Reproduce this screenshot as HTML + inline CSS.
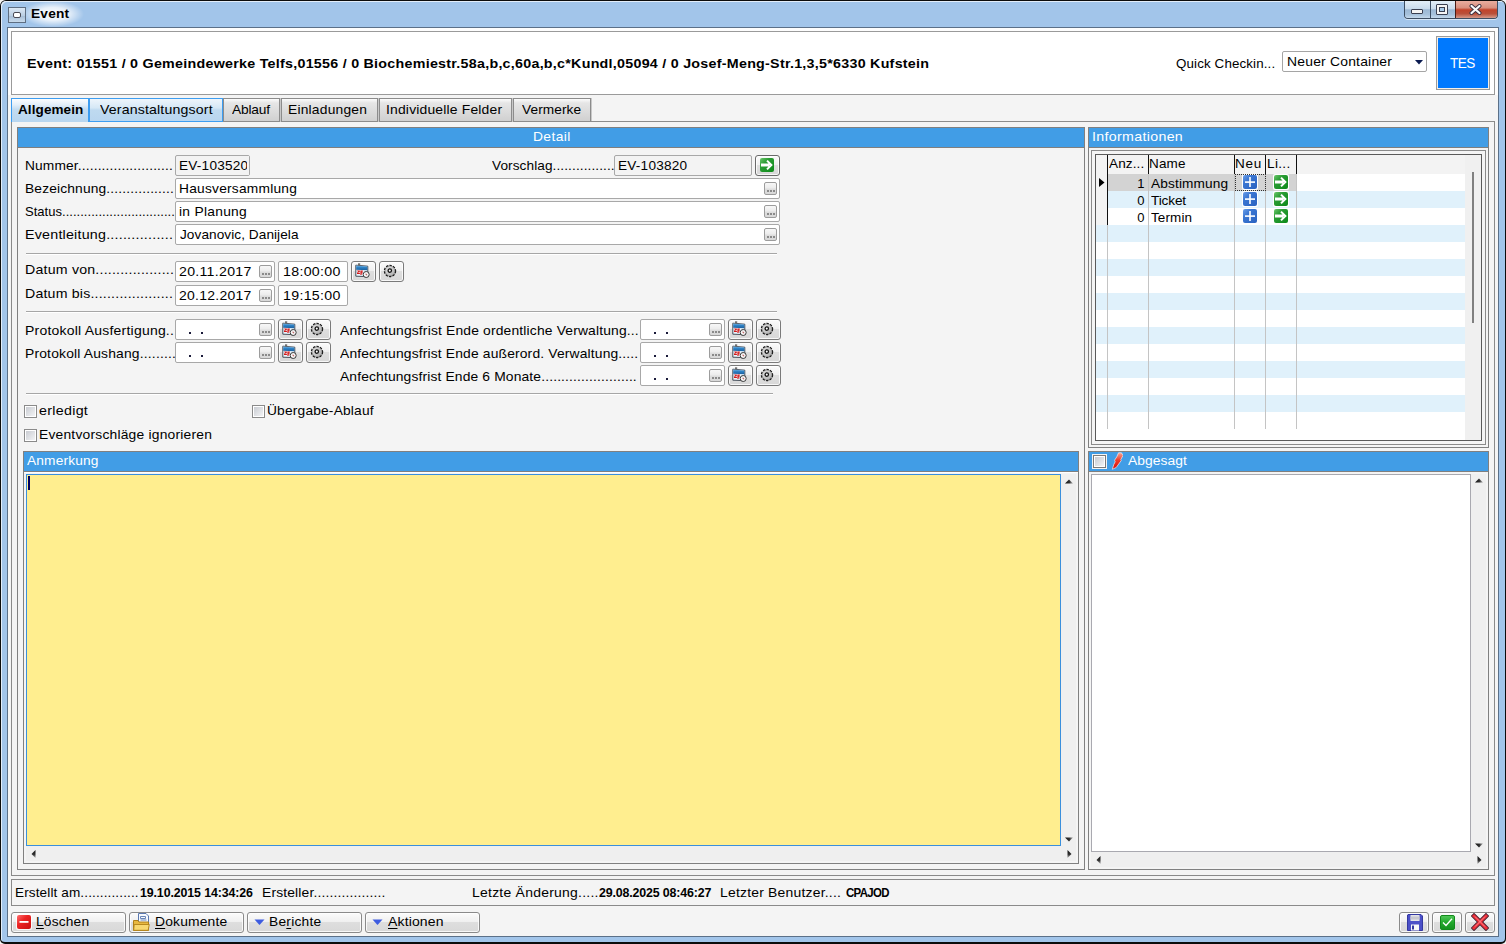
<!DOCTYPE html>
<html><head><meta charset="utf-8"><title>Event</title>
<style>
*{box-sizing:border-box}
html,body{margin:0;padding:0}
body{width:1506px;height:944px;overflow:hidden;position:relative;font-family:"Liberation Sans",sans-serif;font-size:13px;color:#000;background:#f4f4f4}
.a{position:absolute}
.t{position:absolute;white-space:nowrap;line-height:16px}
u{text-decoration:underline;text-underline-offset:2px}
</style></head><body>
<svg width="0" height="0" style="position:absolute"><defs><linearGradient id="ah" x1="0" y1="0" x2="1" y2="0"><stop offset="0" stop-color="#101010"/><stop offset=".55" stop-color="#303030"/><stop offset="1" stop-color="#b0b0b0"/></linearGradient><linearGradient id="av" x1="0" y1="0" x2="0" y2="1"><stop offset="0" stop-color="#101010"/><stop offset=".55" stop-color="#303030"/><stop offset="1" stop-color="#b0b0b0"/></linearGradient><linearGradient id="bolt" x1="0" y1="0" x2="0" y2="1"><stop offset="0" stop-color="#f7a595"/><stop offset=".45" stop-color="#ee3a2a"/><stop offset="1" stop-color="#d80c0c"/></linearGradient><linearGradient id="gearg" x1="0" y1="0" x2="1" y2="1"><stop offset="0" stop-color="#e8e8e8"/><stop offset="1" stop-color="#a8a8a8"/></linearGradient></defs></svg>
<div class="a" style="left:0px;top:0px;width:1506px;height:944px;background:#0c0c0c;border-radius:6px 6px 5px 5px"></div>
<div class="a" style="left:1px;top:1px;width:1504px;height:941px;background:#a2c5ea;border-radius:5px 5px 4px 4px;box-shadow:inset 1px 1px 0 #e3eefa"></div>
<div class="a" style="left:22px;top:1px;width:62px;height:26px;background:radial-gradient(ellipse closest-side at center,rgba(255,255,255,.95) 0%,rgba(255,255,255,.75) 50%,rgba(255,255,255,0) 100%)"></div>
<div class="a" style="left:8px;top:7px;width:18px;height:16px;border:1px solid #5e6e82;background:linear-gradient(#dde9f5,#b9cde2 55%,#a9c0d8 60%,#c9dbec);"></div>
<div class="a" style="left:13px;top:12px;width:8px;height:6px;background:#fff;border:1px solid #4a4a55;border-radius:2px"></div>
<div class="a" style="left:1404px;top:1px;width:94px;height:18px;border:1px solid #3d4e63;border-top:none;border-radius:0 0 4px 4px;overflow:hidden;background:#a2c5ea;box-shadow:0 1px 0 rgba(255,255,255,.55)">
<div class="a" style="left:0;top:0;width:25px;height:17px;background:linear-gradient(#e3eef8,#c9dbec 45%,#9cb8d4 52%,#a7c2dc 80%,#c4d8eb)"></div>
<div class="a" style="left:25px;top:0;width:1px;height:17px;background:#3d4e63"></div>
<div class="a" style="left:26px;top:0;width:24px;height:17px;background:linear-gradient(#e3eef8,#c9dbec 45%,#9cb8d4 52%,#a7c2dc 80%,#c4d8eb)"></div>
<div class="a" style="left:50px;top:0;width:1px;height:17px;background:#4a1c14"></div>
<div class="a" style="left:51px;top:0;width:42px;height:17px;background:linear-gradient(#e9ad9f,#d8907f 40%,#c2432b 52%,#b9503a 75%,#d69a8a)"></div>
<div class="a" style="left:6px;top:8px;width:12px;height:5px;background:#f4f4f4;border:1px solid #3a3f50;border-radius:1px"></div>
<div class="a" style="left:31px;top:3px;width:12px;height:11px;background:#f4f4f4;border:1px solid #3a3f50;border-radius:1px"><div class="a" style="left:2px;top:2px;width:6px;height:5px;border:1px solid #3a3f50;background:#a9cbe8"></div></div>
<svg class="a" style="left:64px;top:3px" width="13" height="11" viewBox="0 0 13 11"><path d="M2.5 2 L10.5 9 M10.5 2 L2.5 9" stroke="#3a3040" stroke-width="4" stroke-linecap="round"/><path d="M2.5 2 L10.5 9 M10.5 2 L2.5 9" stroke="#fafafa" stroke-width="2.2" stroke-linecap="round"/></svg>
</div>
<div class="a" style="left:7px;top:27px;width:1492px;height:910px;border:1px solid #5b7088;background:#f4f4f4;"></div>
<div class="a" style="left:8px;top:28px;width:1490px;height:67px;background:#fdfdfd"></div>
<div class="a" style="left:11px;top:31px;width:1484px;height:64px;border:1px solid #9a9a9a;background:#fff;"></div>
<div class="a" style="left:1282px;top:51px;width:145px;height:21px;border:1px solid #a5a5a5;background:#fff;border-radius:2px"></div>
<svg class="a" style="left:1415px;top:60px" width="8" height="5"><path d="M0 0H8L4 4.5Z" fill="#0a1a50"/></svg>
<div class="a" style="left:1436px;top:36px;width:54px;height:54px;border:1px solid #9a9a9a;background:#0079fe;box-shadow:inset 0 0 0 1px #f3efe9"></div>
<div class="a" style="left:11px;top:98px;width:78px;height:24px;border:1px solid #3d9df0;border-bottom:none;background:linear-gradient(#fbfdff 0%,#e3eff9 25%,#c3dcf1 45%,#b8d6ef 100%)"></div>
<div class="a" style="left:89px;top:98px;width:134px;height:24px;border:1px solid #3d9df0;background:linear-gradient(#eef5fb 0%,#d6e8f6 40%,#bfdaf0 50%,#b9d6ef 100%)"></div>
<div class="a" style="left:223px;top:98px;width:57px;height:24px;border:1px solid #8c8c8c;background:linear-gradient(#fcfcfc 0%,#e6e6e6 18%,#dcdcdc 55%,#d0d0d0 100%);box-shadow:1px 0 0 #c8c8c8"></div>
<div class="a" style="left:281px;top:98px;width:97px;height:24px;border:1px solid #8c8c8c;background:linear-gradient(#fcfcfc 0%,#e6e6e6 18%,#dcdcdc 55%,#d0d0d0 100%);box-shadow:1px 0 0 #c8c8c8"></div>
<div class="a" style="left:379px;top:98px;width:133px;height:24px;border:1px solid #8c8c8c;background:linear-gradient(#fcfcfc 0%,#e6e6e6 18%,#dcdcdc 55%,#d0d0d0 100%);box-shadow:1px 0 0 #c8c8c8"></div>
<div class="a" style="left:513px;top:98px;width:78px;height:24px;border:1px solid #8c8c8c;background:linear-gradient(#fcfcfc 0%,#e6e6e6 18%,#dcdcdc 55%,#d0d0d0 100%);box-shadow:1px 0 0 #c8c8c8"></div>
<div class="a" style="left:591px;top:121px;width:904px;height:1px;background:#8c8c8c"></div>
<div class="a" style="left:11px;top:122px;width:1px;height:754px;background:#8a8a8a"></div>
<div class="a" style="left:1494px;top:121px;width:1px;height:755px;background:#8a8a8a"></div>
<div class="a" style="left:11px;top:875px;width:1484px;height:1px;background:#8a8a8a"></div>
<div class="a" style="left:17px;top:127px;width:1068px;height:743px;border:1px solid #808080;"></div>
<div class="a" style="left:18px;top:128px;width:1066px;height:19px;background:#419de6"></div>
<div class="a" style="left:18px;top:147px;width:1066px;height:1px;background:#7f7f7f"></div>
<div class="a" style="left:175px;top:155px;width:75px;height:21px;border:1px solid #a8a8a8;background:#f3f3f3;border-radius:2px"></div>
<div class="a" style="left:614px;top:155px;width:138px;height:21px;border:1px solid #a8a8a8;background:#f3f3f3;border-radius:2px"></div>
<div class="a" style="left:755px;top:155px;width:25px;height:21px;border:1px solid #6a6a6a;border-radius:3px;background:linear-gradient(#fbfbfb 0%,#f0f0f0 45%,#dedede 50%,#d8d8d8 100%);box-shadow:inset 0 0 0 1px rgba(255,255,255,.8)"></div>
<svg class="a" style="left:760px;top:158px" width="14" height="14" viewBox="0 0 14 14"><defs><linearGradient id="g0" x1="0" y1="0" x2="1" y2="1"><stop offset="0" stop-color="#6cc86c"/><stop offset=".35" stop-color="#2a9c34"/><stop offset="1" stop-color="#0b8a18"/></linearGradient></defs><rect x="0" y="0" width="14" height="14" rx="2" fill="url(#g0)"/><path d="M2 6.4H8.6V7.6H2Z M7 2.6L11.4 7L7 11.4" stroke="#fff" stroke-width="2" fill="none"/></svg>
<div class="a" style="left:175px;top:178px;width:605px;height:21px;border:1px solid #a8a8a8;background:#fff;border-radius:2px"></div>
<div class="a" style="left:764px;top:182px;width:13px;height:13px;border:1px solid #9c9c9c;border-radius:2px;background:linear-gradient(#f7f7f7 0%,#ececec 45%,#dedede 55%,#d8d8d8 100%)"><div class="a" style="left:2px;top:7px;width:2px;height:2px;background:#8a8a8a"></div><div class="a" style="left:5px;top:7px;width:2px;height:2px;background:#8a8a8a"></div><div class="a" style="left:8px;top:7px;width:2px;height:2px;background:#8a8a8a"></div></div>
<div class="a" style="left:175px;top:201px;width:605px;height:21px;border:1px solid #a8a8a8;background:#fff;border-radius:2px"></div>
<div class="a" style="left:764px;top:205px;width:13px;height:13px;border:1px solid #9c9c9c;border-radius:2px;background:linear-gradient(#f7f7f7 0%,#ececec 45%,#dedede 55%,#d8d8d8 100%)"><div class="a" style="left:2px;top:7px;width:2px;height:2px;background:#8a8a8a"></div><div class="a" style="left:5px;top:7px;width:2px;height:2px;background:#8a8a8a"></div><div class="a" style="left:8px;top:7px;width:2px;height:2px;background:#8a8a8a"></div></div>
<div class="a" style="left:175px;top:224px;width:605px;height:21px;border:1px solid #a8a8a8;background:#fff;border-radius:2px"></div>
<div class="a" style="left:764px;top:228px;width:13px;height:13px;border:1px solid #9c9c9c;border-radius:2px;background:linear-gradient(#f7f7f7 0%,#ececec 45%,#dedede 55%,#d8d8d8 100%)"><div class="a" style="left:2px;top:7px;width:2px;height:2px;background:#8a8a8a"></div><div class="a" style="left:5px;top:7px;width:2px;height:2px;background:#8a8a8a"></div><div class="a" style="left:8px;top:7px;width:2px;height:2px;background:#8a8a8a"></div></div>
<div class="a" style="left:26px;top:253px;width:751px;height:1px;background:#a6a6a6"></div>
<div class="a" style="left:26px;top:254px;width:751px;height:1px;background:#ffffff"></div>
<div class="a" style="left:175px;top:261px;width:100px;height:21px;border:1px solid #a8a8a8;background:#fff;border-radius:2px"></div>
<div class="a" style="left:259px;top:265px;width:13px;height:13px;border:1px solid #9c9c9c;border-radius:2px;background:linear-gradient(#f7f7f7 0%,#ececec 45%,#dedede 55%,#d8d8d8 100%)"><div class="a" style="left:2px;top:7px;width:2px;height:2px;background:#8a8a8a"></div><div class="a" style="left:5px;top:7px;width:2px;height:2px;background:#8a8a8a"></div><div class="a" style="left:8px;top:7px;width:2px;height:2px;background:#8a8a8a"></div></div>
<div class="a" style="left:278px;top:261px;width:70px;height:21px;border:1px solid #a8a8a8;background:#fff;border-radius:2px"></div>
<div class="a" style="left:175px;top:285px;width:100px;height:21px;border:1px solid #a8a8a8;background:#fff;border-radius:2px"></div>
<div class="a" style="left:259px;top:289px;width:13px;height:13px;border:1px solid #9c9c9c;border-radius:2px;background:linear-gradient(#f7f7f7 0%,#ececec 45%,#dedede 55%,#d8d8d8 100%)"><div class="a" style="left:2px;top:7px;width:2px;height:2px;background:#8a8a8a"></div><div class="a" style="left:5px;top:7px;width:2px;height:2px;background:#8a8a8a"></div><div class="a" style="left:8px;top:7px;width:2px;height:2px;background:#8a8a8a"></div></div>
<div class="a" style="left:278px;top:285px;width:70px;height:21px;border:1px solid #a8a8a8;background:#fff;border-radius:2px"></div>
<div class="a" style="left:351px;top:261px;width:25px;height:21px;border:1px solid #7a7a7a;border-radius:3px;background:linear-gradient(#fbfbfb 0%,#f0f0f0 45%,#dedede 50%,#d8d8d8 100%);box-shadow:inset 0 0 0 1px rgba(255,255,255,.8)"></div>
<svg class="a" style="left:355px;top:263px" width="15" height="16" viewBox="0 0 15 16"><defs><linearGradient id="calb" x1="0" y1="0" x2="0" y2="1"><stop offset="0" stop-color="#7ab8e6"/><stop offset=".4" stop-color="#2f84c8"/><stop offset="1" stop-color="#1a5f9e"/></linearGradient></defs><path d="M0.8 2.2L12.8 3.2V13.6L0.8 13.2Z" fill="#eaf4fb" stroke="#333c48" stroke-width=".9"/><path d="M1.2 2.4L12.4 3.4V7.2L1.2 6.8Z" fill="url(#calb)"/><rect x="3" y="0.3" width="2.2" height="2.2" fill="#707070"/><path d="M2.2 7.6h2.6v1.3H3.6l-.3.8h1.6v1.4H2v-1.2l1.3-1.6H2.2z M5.4 7.6h2.4v1.2H6.6v.5h1.1v1.2H6.6v1.6H5.4z" fill="#d41818"/><circle cx="11.2" cy="11.5" r="3" fill="#f8f8f8" stroke="#3a3a3a" stroke-width="1"/><path d="M11 10.6V11.8H12.2" stroke="#a02020" stroke-width=".7" fill="none"/></svg>
<div class="a" style="left:379px;top:261px;width:25px;height:21px;border:1px solid #7a7a7a;border-radius:3px;background:linear-gradient(#fbfbfb 0%,#f0f0f0 45%,#dedede 50%,#d8d8d8 100%);box-shadow:inset 0 0 0 1px rgba(255,255,255,.8)"></div>
<svg class="a" style="left:383px;top:264px" width="14" height="14" viewBox="0 0 14 14"><circle cx="7" cy="7" r="5.6" fill="url(#gearg)" stroke="#111" stroke-width="1.2" stroke-dasharray="2.4 1.2"/><circle cx="7" cy="7" r="4.9" fill="none" stroke="#777" stroke-width=".5"/><circle cx="6.8" cy="6.6" r="1.7" fill="#fafafa" stroke="#111" stroke-width="1.3"/></svg>
<div class="a" style="left:26px;top:311px;width:751px;height:1px;background:#a6a6a6"></div>
<div class="a" style="left:26px;top:312px;width:751px;height:1px;background:#ffffff"></div>
<div class="a" style="left:175px;top:319px;width:100px;height:21px;border:1px solid #a8a8a8;background:#fff;border-radius:2px"></div>
<div class="a" style="left:259px;top:323px;width:13px;height:13px;border:1px solid #9c9c9c;border-radius:2px;background:linear-gradient(#f7f7f7 0%,#ececec 45%,#dedede 55%,#d8d8d8 100%)"><div class="a" style="left:2px;top:7px;width:2px;height:2px;background:#8a8a8a"></div><div class="a" style="left:5px;top:7px;width:2px;height:2px;background:#8a8a8a"></div><div class="a" style="left:8px;top:7px;width:2px;height:2px;background:#8a8a8a"></div></div>
<div class="a" style="left:278px;top:319px;width:25px;height:21px;border:1px solid #7a7a7a;border-radius:3px;background:linear-gradient(#fbfbfb 0%,#f0f0f0 45%,#dedede 50%,#d8d8d8 100%);box-shadow:inset 0 0 0 1px rgba(255,255,255,.8)"></div>
<svg class="a" style="left:282px;top:321px" width="15" height="16" viewBox="0 0 15 16"><defs><linearGradient id="calb" x1="0" y1="0" x2="0" y2="1"><stop offset="0" stop-color="#7ab8e6"/><stop offset=".4" stop-color="#2f84c8"/><stop offset="1" stop-color="#1a5f9e"/></linearGradient></defs><path d="M0.8 2.2L12.8 3.2V13.6L0.8 13.2Z" fill="#eaf4fb" stroke="#333c48" stroke-width=".9"/><path d="M1.2 2.4L12.4 3.4V7.2L1.2 6.8Z" fill="url(#calb)"/><rect x="3" y="0.3" width="2.2" height="2.2" fill="#707070"/><path d="M2.2 7.6h2.6v1.3H3.6l-.3.8h1.6v1.4H2v-1.2l1.3-1.6H2.2z M5.4 7.6h2.4v1.2H6.6v.5h1.1v1.2H6.6v1.6H5.4z" fill="#d41818"/><circle cx="11.2" cy="11.5" r="3" fill="#f8f8f8" stroke="#3a3a3a" stroke-width="1"/><path d="M11 10.6V11.8H12.2" stroke="#a02020" stroke-width=".7" fill="none"/></svg>
<div class="a" style="left:306px;top:319px;width:25px;height:21px;border:1px solid #7a7a7a;border-radius:3px;background:linear-gradient(#fbfbfb 0%,#f0f0f0 45%,#dedede 50%,#d8d8d8 100%);box-shadow:inset 0 0 0 1px rgba(255,255,255,.8)"></div>
<svg class="a" style="left:310px;top:322px" width="14" height="14" viewBox="0 0 14 14"><circle cx="7" cy="7" r="5.6" fill="url(#gearg)" stroke="#111" stroke-width="1.2" stroke-dasharray="2.4 1.2"/><circle cx="7" cy="7" r="4.9" fill="none" stroke="#777" stroke-width=".5"/><circle cx="6.8" cy="6.6" r="1.7" fill="#fafafa" stroke="#111" stroke-width="1.3"/></svg>
<div class="a" style="left:189px;top:332px;width:2px;height:2px;background:#1a1a3a"></div>
<div class="a" style="left:201px;top:332px;width:2px;height:2px;background:#1a1a3a"></div>
<div class="a" style="left:175px;top:342px;width:100px;height:21px;border:1px solid #a8a8a8;background:#fff;border-radius:2px"></div>
<div class="a" style="left:259px;top:346px;width:13px;height:13px;border:1px solid #9c9c9c;border-radius:2px;background:linear-gradient(#f7f7f7 0%,#ececec 45%,#dedede 55%,#d8d8d8 100%)"><div class="a" style="left:2px;top:7px;width:2px;height:2px;background:#8a8a8a"></div><div class="a" style="left:5px;top:7px;width:2px;height:2px;background:#8a8a8a"></div><div class="a" style="left:8px;top:7px;width:2px;height:2px;background:#8a8a8a"></div></div>
<div class="a" style="left:278px;top:342px;width:25px;height:21px;border:1px solid #7a7a7a;border-radius:3px;background:linear-gradient(#fbfbfb 0%,#f0f0f0 45%,#dedede 50%,#d8d8d8 100%);box-shadow:inset 0 0 0 1px rgba(255,255,255,.8)"></div>
<svg class="a" style="left:282px;top:344px" width="15" height="16" viewBox="0 0 15 16"><defs><linearGradient id="calb" x1="0" y1="0" x2="0" y2="1"><stop offset="0" stop-color="#7ab8e6"/><stop offset=".4" stop-color="#2f84c8"/><stop offset="1" stop-color="#1a5f9e"/></linearGradient></defs><path d="M0.8 2.2L12.8 3.2V13.6L0.8 13.2Z" fill="#eaf4fb" stroke="#333c48" stroke-width=".9"/><path d="M1.2 2.4L12.4 3.4V7.2L1.2 6.8Z" fill="url(#calb)"/><rect x="3" y="0.3" width="2.2" height="2.2" fill="#707070"/><path d="M2.2 7.6h2.6v1.3H3.6l-.3.8h1.6v1.4H2v-1.2l1.3-1.6H2.2z M5.4 7.6h2.4v1.2H6.6v.5h1.1v1.2H6.6v1.6H5.4z" fill="#d41818"/><circle cx="11.2" cy="11.5" r="3" fill="#f8f8f8" stroke="#3a3a3a" stroke-width="1"/><path d="M11 10.6V11.8H12.2" stroke="#a02020" stroke-width=".7" fill="none"/></svg>
<div class="a" style="left:306px;top:342px;width:25px;height:21px;border:1px solid #7a7a7a;border-radius:3px;background:linear-gradient(#fbfbfb 0%,#f0f0f0 45%,#dedede 50%,#d8d8d8 100%);box-shadow:inset 0 0 0 1px rgba(255,255,255,.8)"></div>
<svg class="a" style="left:310px;top:345px" width="14" height="14" viewBox="0 0 14 14"><circle cx="7" cy="7" r="5.6" fill="url(#gearg)" stroke="#111" stroke-width="1.2" stroke-dasharray="2.4 1.2"/><circle cx="7" cy="7" r="4.9" fill="none" stroke="#777" stroke-width=".5"/><circle cx="6.8" cy="6.6" r="1.7" fill="#fafafa" stroke="#111" stroke-width="1.3"/></svg>
<div class="a" style="left:189px;top:355px;width:2px;height:2px;background:#1a1a3a"></div>
<div class="a" style="left:201px;top:355px;width:2px;height:2px;background:#1a1a3a"></div>
<div class="a" style="left:640px;top:319px;width:85px;height:21px;border:1px solid #a8a8a8;background:#fff;border-radius:2px"></div>
<div class="a" style="left:709px;top:323px;width:13px;height:13px;border:1px solid #9c9c9c;border-radius:2px;background:linear-gradient(#f7f7f7 0%,#ececec 45%,#dedede 55%,#d8d8d8 100%)"><div class="a" style="left:2px;top:7px;width:2px;height:2px;background:#8a8a8a"></div><div class="a" style="left:5px;top:7px;width:2px;height:2px;background:#8a8a8a"></div><div class="a" style="left:8px;top:7px;width:2px;height:2px;background:#8a8a8a"></div></div>
<div class="a" style="left:728px;top:319px;width:25px;height:21px;border:1px solid #7a7a7a;border-radius:3px;background:linear-gradient(#fbfbfb 0%,#f0f0f0 45%,#dedede 50%,#d8d8d8 100%);box-shadow:inset 0 0 0 1px rgba(255,255,255,.8)"></div>
<svg class="a" style="left:732px;top:321px" width="15" height="16" viewBox="0 0 15 16"><defs><linearGradient id="calb" x1="0" y1="0" x2="0" y2="1"><stop offset="0" stop-color="#7ab8e6"/><stop offset=".4" stop-color="#2f84c8"/><stop offset="1" stop-color="#1a5f9e"/></linearGradient></defs><path d="M0.8 2.2L12.8 3.2V13.6L0.8 13.2Z" fill="#eaf4fb" stroke="#333c48" stroke-width=".9"/><path d="M1.2 2.4L12.4 3.4V7.2L1.2 6.8Z" fill="url(#calb)"/><rect x="3" y="0.3" width="2.2" height="2.2" fill="#707070"/><path d="M2.2 7.6h2.6v1.3H3.6l-.3.8h1.6v1.4H2v-1.2l1.3-1.6H2.2z M5.4 7.6h2.4v1.2H6.6v.5h1.1v1.2H6.6v1.6H5.4z" fill="#d41818"/><circle cx="11.2" cy="11.5" r="3" fill="#f8f8f8" stroke="#3a3a3a" stroke-width="1"/><path d="M11 10.6V11.8H12.2" stroke="#a02020" stroke-width=".7" fill="none"/></svg>
<div class="a" style="left:756px;top:319px;width:25px;height:21px;border:1px solid #7a7a7a;border-radius:3px;background:linear-gradient(#fbfbfb 0%,#f0f0f0 45%,#dedede 50%,#d8d8d8 100%);box-shadow:inset 0 0 0 1px rgba(255,255,255,.8)"></div>
<svg class="a" style="left:760px;top:322px" width="14" height="14" viewBox="0 0 14 14"><circle cx="7" cy="7" r="5.6" fill="url(#gearg)" stroke="#111" stroke-width="1.2" stroke-dasharray="2.4 1.2"/><circle cx="7" cy="7" r="4.9" fill="none" stroke="#777" stroke-width=".5"/><circle cx="6.8" cy="6.6" r="1.7" fill="#fafafa" stroke="#111" stroke-width="1.3"/></svg>
<div class="a" style="left:654px;top:332px;width:2px;height:2px;background:#1a1a3a"></div>
<div class="a" style="left:666px;top:332px;width:2px;height:2px;background:#1a1a3a"></div>
<div class="a" style="left:640px;top:342px;width:85px;height:21px;border:1px solid #a8a8a8;background:#fff;border-radius:2px"></div>
<div class="a" style="left:709px;top:346px;width:13px;height:13px;border:1px solid #9c9c9c;border-radius:2px;background:linear-gradient(#f7f7f7 0%,#ececec 45%,#dedede 55%,#d8d8d8 100%)"><div class="a" style="left:2px;top:7px;width:2px;height:2px;background:#8a8a8a"></div><div class="a" style="left:5px;top:7px;width:2px;height:2px;background:#8a8a8a"></div><div class="a" style="left:8px;top:7px;width:2px;height:2px;background:#8a8a8a"></div></div>
<div class="a" style="left:728px;top:342px;width:25px;height:21px;border:1px solid #7a7a7a;border-radius:3px;background:linear-gradient(#fbfbfb 0%,#f0f0f0 45%,#dedede 50%,#d8d8d8 100%);box-shadow:inset 0 0 0 1px rgba(255,255,255,.8)"></div>
<svg class="a" style="left:732px;top:344px" width="15" height="16" viewBox="0 0 15 16"><defs><linearGradient id="calb" x1="0" y1="0" x2="0" y2="1"><stop offset="0" stop-color="#7ab8e6"/><stop offset=".4" stop-color="#2f84c8"/><stop offset="1" stop-color="#1a5f9e"/></linearGradient></defs><path d="M0.8 2.2L12.8 3.2V13.6L0.8 13.2Z" fill="#eaf4fb" stroke="#333c48" stroke-width=".9"/><path d="M1.2 2.4L12.4 3.4V7.2L1.2 6.8Z" fill="url(#calb)"/><rect x="3" y="0.3" width="2.2" height="2.2" fill="#707070"/><path d="M2.2 7.6h2.6v1.3H3.6l-.3.8h1.6v1.4H2v-1.2l1.3-1.6H2.2z M5.4 7.6h2.4v1.2H6.6v.5h1.1v1.2H6.6v1.6H5.4z" fill="#d41818"/><circle cx="11.2" cy="11.5" r="3" fill="#f8f8f8" stroke="#3a3a3a" stroke-width="1"/><path d="M11 10.6V11.8H12.2" stroke="#a02020" stroke-width=".7" fill="none"/></svg>
<div class="a" style="left:756px;top:342px;width:25px;height:21px;border:1px solid #7a7a7a;border-radius:3px;background:linear-gradient(#fbfbfb 0%,#f0f0f0 45%,#dedede 50%,#d8d8d8 100%);box-shadow:inset 0 0 0 1px rgba(255,255,255,.8)"></div>
<svg class="a" style="left:760px;top:345px" width="14" height="14" viewBox="0 0 14 14"><circle cx="7" cy="7" r="5.6" fill="url(#gearg)" stroke="#111" stroke-width="1.2" stroke-dasharray="2.4 1.2"/><circle cx="7" cy="7" r="4.9" fill="none" stroke="#777" stroke-width=".5"/><circle cx="6.8" cy="6.6" r="1.7" fill="#fafafa" stroke="#111" stroke-width="1.3"/></svg>
<div class="a" style="left:654px;top:355px;width:2px;height:2px;background:#1a1a3a"></div>
<div class="a" style="left:666px;top:355px;width:2px;height:2px;background:#1a1a3a"></div>
<div class="a" style="left:640px;top:365px;width:85px;height:21px;border:1px solid #a8a8a8;background:#fff;border-radius:2px"></div>
<div class="a" style="left:709px;top:369px;width:13px;height:13px;border:1px solid #9c9c9c;border-radius:2px;background:linear-gradient(#f7f7f7 0%,#ececec 45%,#dedede 55%,#d8d8d8 100%)"><div class="a" style="left:2px;top:7px;width:2px;height:2px;background:#8a8a8a"></div><div class="a" style="left:5px;top:7px;width:2px;height:2px;background:#8a8a8a"></div><div class="a" style="left:8px;top:7px;width:2px;height:2px;background:#8a8a8a"></div></div>
<div class="a" style="left:728px;top:365px;width:25px;height:21px;border:1px solid #7a7a7a;border-radius:3px;background:linear-gradient(#fbfbfb 0%,#f0f0f0 45%,#dedede 50%,#d8d8d8 100%);box-shadow:inset 0 0 0 1px rgba(255,255,255,.8)"></div>
<svg class="a" style="left:732px;top:367px" width="15" height="16" viewBox="0 0 15 16"><defs><linearGradient id="calb" x1="0" y1="0" x2="0" y2="1"><stop offset="0" stop-color="#7ab8e6"/><stop offset=".4" stop-color="#2f84c8"/><stop offset="1" stop-color="#1a5f9e"/></linearGradient></defs><path d="M0.8 2.2L12.8 3.2V13.6L0.8 13.2Z" fill="#eaf4fb" stroke="#333c48" stroke-width=".9"/><path d="M1.2 2.4L12.4 3.4V7.2L1.2 6.8Z" fill="url(#calb)"/><rect x="3" y="0.3" width="2.2" height="2.2" fill="#707070"/><path d="M2.2 7.6h2.6v1.3H3.6l-.3.8h1.6v1.4H2v-1.2l1.3-1.6H2.2z M5.4 7.6h2.4v1.2H6.6v.5h1.1v1.2H6.6v1.6H5.4z" fill="#d41818"/><circle cx="11.2" cy="11.5" r="3" fill="#f8f8f8" stroke="#3a3a3a" stroke-width="1"/><path d="M11 10.6V11.8H12.2" stroke="#a02020" stroke-width=".7" fill="none"/></svg>
<div class="a" style="left:756px;top:365px;width:25px;height:21px;border:1px solid #7a7a7a;border-radius:3px;background:linear-gradient(#fbfbfb 0%,#f0f0f0 45%,#dedede 50%,#d8d8d8 100%);box-shadow:inset 0 0 0 1px rgba(255,255,255,.8)"></div>
<svg class="a" style="left:760px;top:368px" width="14" height="14" viewBox="0 0 14 14"><circle cx="7" cy="7" r="5.6" fill="url(#gearg)" stroke="#111" stroke-width="1.2" stroke-dasharray="2.4 1.2"/><circle cx="7" cy="7" r="4.9" fill="none" stroke="#777" stroke-width=".5"/><circle cx="6.8" cy="6.6" r="1.7" fill="#fafafa" stroke="#111" stroke-width="1.3"/></svg>
<div class="a" style="left:654px;top:378px;width:2px;height:2px;background:#1a1a3a"></div>
<div class="a" style="left:666px;top:378px;width:2px;height:2px;background:#1a1a3a"></div>
<div class="a" style="left:26px;top:393px;width:747px;height:1px;background:#a6a6a6"></div>
<div class="a" style="left:26px;top:394px;width:747px;height:1px;background:#ffffff"></div>
<div class="a" style="left:24px;top:405px;width:13px;height:13px;border:1px solid #8a8a8a;background:#fff"></div>
<div class="a" style="left:26px;top:407px;width:9px;height:9px;background:linear-gradient(135deg,#c9ccd2,#f2f3f5)"></div>
<div class="a" style="left:24px;top:429px;width:13px;height:13px;border:1px solid #8a8a8a;background:#fff"></div>
<div class="a" style="left:26px;top:431px;width:9px;height:9px;background:linear-gradient(135deg,#c9ccd2,#f2f3f5)"></div>
<div class="a" style="left:252px;top:405px;width:13px;height:13px;border:1px solid #8a8a8a;background:#fff"></div>
<div class="a" style="left:254px;top:407px;width:9px;height:9px;background:linear-gradient(135deg,#c9ccd2,#f2f3f5)"></div>
<div class="a" style="left:23px;top:451px;width:1056px;height:413px;border:1px solid #808080;"></div>
<div class="a" style="left:24px;top:452px;width:1054px;height:19px;background:#419de6"></div>
<div class="a" style="left:24px;top:471px;width:1054px;height:1px;background:#7f7f7f"></div>
<div class="a" style="left:24px;top:472px;width:1054px;height:391px;background:#f4f4f4"></div>
<div class="a" style="left:24px;top:472px;width:1054px;height:1px;background:#ffffff"></div>
<div class="a" style="left:26px;top:474px;width:1035px;height:372px;border:1px solid #3a8fdc;background:#ffee8f;"></div>
<div class="a" style="left:28px;top:476px;width:2px;height:14px;background:#000060"></div>
<div class="a" style="left:1061px;top:474px;width:15px;height:372px;background:#efefef"></div>
<div class="a" style="left:26px;top:846px;width:1050px;height:15px;background:#efefef"></div>
<svg class="a" style="left:1065px;top:479px" width="8" height="5"><path d="M0 4.5L4 0.5L8 4.5Z" fill="url(#ah)"/></svg>
<svg class="a" style="left:1065px;top:837px" width="8" height="5"><path d="M0 0.5L8 0.5L4 4.5Z" fill="url(#ah)"/></svg>
<svg class="a" style="left:31px;top:850px" width="5" height="8"><path d="M4.5 0L0.5 4L4.5 8Z" fill="url(#av)"/></svg>
<svg class="a" style="left:1067px;top:850px" width="5" height="8"><path d="M0.5 0L4.5 4L0.5 8Z" fill="url(#av)"/></svg>
<div class="a" style="left:1088px;top:127px;width:401px;height:321px;border:1px solid #808080;"></div>
<div class="a" style="left:1089px;top:128px;width:399px;height:19px;background:#419de6"></div>
<div class="a" style="left:1089px;top:147px;width:399px;height:1px;background:#7f7f7f"></div>
<div class="a" style="left:1091px;top:150px;width:395px;height:295px;border:1px solid #8a8a8a;"></div>
<div class="a" style="left:1095px;top:154px;width:387px;height:287px;border:1px solid #5a5a5a;background:#fff;"></div>
<div class="a" style="left:1096px;top:155px;width:369px;height:19px;background:#f3f3f3"></div>
<div class="a" style="left:1108px;top:191px;width:357px;height:17px;background:#e0f1fb"></div>
<div class="a" style="left:1096px;top:225px;width:369px;height:17px;background:#e0f1fb"></div>
<div class="a" style="left:1096px;top:259px;width:369px;height:17px;background:#e0f1fb"></div>
<div class="a" style="left:1096px;top:293px;width:369px;height:17px;background:#e0f1fb"></div>
<div class="a" style="left:1096px;top:327px;width:369px;height:17px;background:#e0f1fb"></div>
<div class="a" style="left:1096px;top:361px;width:369px;height:17px;background:#e0f1fb"></div>
<div class="a" style="left:1096px;top:395px;width:369px;height:17px;background:#e0f1fb"></div>
<div class="a" style="left:1108px;top:174px;width:189px;height:17px;background:#d3d3d3"></div>
<div class="a" style="left:1096px;top:174px;width:11px;height:51px;background:#f3f3f3"></div>
<div class="a" style="left:1148px;top:174px;width:1px;height:255px;background:#c4c4c4"></div>
<div class="a" style="left:1234px;top:174px;width:1px;height:255px;background:#c4c4c4"></div>
<div class="a" style="left:1265px;top:174px;width:1px;height:255px;background:#c4c4c4"></div>
<div class="a" style="left:1296px;top:174px;width:1px;height:255px;background:#c4c4c4"></div>
<div class="a" style="left:1107px;top:225px;width:1px;height:204px;background:#c4c4c4"></div>
<div class="a" style="left:1107px;top:155px;width:1px;height:70px;background:#101010"></div>
<div class="a" style="left:1148px;top:155px;width:1px;height:19px;background:#101010"></div>
<div class="a" style="left:1234px;top:155px;width:1px;height:19px;background:#101010"></div>
<div class="a" style="left:1265px;top:155px;width:1px;height:19px;background:#101010"></div>
<div class="a" style="left:1296px;top:155px;width:1px;height:19px;background:#101010"></div>
<svg class="a" style="left:1099px;top:178px" width="6" height="9"><path d="M0 0L5.5 4.5L0 9Z" fill="#000"/></svg>
<div class="a" style="left:1242px;top:174px;width:16px;height:16px;background:#fff;border-radius:2px"></div>
<svg class="a" style="left:1243px;top:175px" width="14" height="14" viewBox="0 0 14 14"><defs><linearGradient id="p0" x1="0" y1="0" x2="1" y2="1"><stop offset="0" stop-color="#6a9ee8"/><stop offset=".35" stop-color="#3a76d2"/><stop offset="1" stop-color="#2a62c0"/></linearGradient></defs><rect x="0" y="0" width="14" height="14" rx="2" fill="url(#p0)"/><rect x="2" y="6.3" width="10" height="1.6" fill="#fff"/><rect x="6.2" y="2" width="1.6" height="10" fill="#fff"/></svg>
<div class="a" style="left:1273px;top:174px;width:16px;height:16px;background:#fff;border-radius:2px"></div>
<svg class="a" style="left:1274px;top:175px" width="14" height="14" viewBox="0 0 14 14"><defs><linearGradient id="g10" x1="0" y1="0" x2="1" y2="1"><stop offset="0" stop-color="#6cc86c"/><stop offset=".35" stop-color="#2a9c34"/><stop offset="1" stop-color="#0b8a18"/></linearGradient></defs><rect x="0" y="0" width="14" height="14" rx="2" fill="url(#g10)"/><path d="M2 6.4H8.6V7.6H2Z M7 2.6L11.4 7L7 11.4" stroke="#fff" stroke-width="2" fill="none"/></svg>
<div class="a" style="left:1242px;top:191px;width:16px;height:16px;background:#fff;border-radius:2px"></div>
<svg class="a" style="left:1243px;top:192px" width="14" height="14" viewBox="0 0 14 14"><defs><linearGradient id="p1" x1="0" y1="0" x2="1" y2="1"><stop offset="0" stop-color="#6a9ee8"/><stop offset=".35" stop-color="#3a76d2"/><stop offset="1" stop-color="#2a62c0"/></linearGradient></defs><rect x="0" y="0" width="14" height="14" rx="2" fill="url(#p1)"/><rect x="2" y="6.3" width="10" height="1.6" fill="#fff"/><rect x="6.2" y="2" width="1.6" height="10" fill="#fff"/></svg>
<div class="a" style="left:1273px;top:191px;width:16px;height:16px;background:#fff;border-radius:2px"></div>
<svg class="a" style="left:1274px;top:192px" width="14" height="14" viewBox="0 0 14 14"><defs><linearGradient id="g11" x1="0" y1="0" x2="1" y2="1"><stop offset="0" stop-color="#6cc86c"/><stop offset=".35" stop-color="#2a9c34"/><stop offset="1" stop-color="#0b8a18"/></linearGradient></defs><rect x="0" y="0" width="14" height="14" rx="2" fill="url(#g11)"/><path d="M2 6.4H8.6V7.6H2Z M7 2.6L11.4 7L7 11.4" stroke="#fff" stroke-width="2" fill="none"/></svg>
<div class="a" style="left:1242px;top:208px;width:16px;height:16px;background:#fff;border-radius:2px"></div>
<svg class="a" style="left:1243px;top:209px" width="14" height="14" viewBox="0 0 14 14"><defs><linearGradient id="p2" x1="0" y1="0" x2="1" y2="1"><stop offset="0" stop-color="#6a9ee8"/><stop offset=".35" stop-color="#3a76d2"/><stop offset="1" stop-color="#2a62c0"/></linearGradient></defs><rect x="0" y="0" width="14" height="14" rx="2" fill="url(#p2)"/><rect x="2" y="6.3" width="10" height="1.6" fill="#fff"/><rect x="6.2" y="2" width="1.6" height="10" fill="#fff"/></svg>
<div class="a" style="left:1273px;top:208px;width:16px;height:16px;background:#fff;border-radius:2px"></div>
<svg class="a" style="left:1274px;top:209px" width="14" height="14" viewBox="0 0 14 14"><defs><linearGradient id="g12" x1="0" y1="0" x2="1" y2="1"><stop offset="0" stop-color="#6cc86c"/><stop offset=".35" stop-color="#2a9c34"/><stop offset="1" stop-color="#0b8a18"/></linearGradient></defs><rect x="0" y="0" width="14" height="14" rx="2" fill="url(#g12)"/><path d="M2 6.4H8.6V7.6H2Z M7 2.6L11.4 7L7 11.4" stroke="#fff" stroke-width="2" fill="none"/></svg>
<div class="a" style="left:1235px;top:174px;width:31px;height:17px;border:1px dotted #303030"></div>
<div class="a" style="left:1465px;top:155px;width:16px;height:285px;background:#f0f0f0"></div>
<div class="a" style="left:1472px;top:172px;width:2px;height:151px;background:#808080"></div>
<div class="a" style="left:1088px;top:451px;width:401px;height:419px;border:1px solid #808080;"></div>
<div class="a" style="left:1089px;top:452px;width:399px;height:19px;background:#419de6"></div>
<div class="a" style="left:1089px;top:471px;width:399px;height:1px;background:#7f7f7f"></div>
<div class="a" style="left:1089px;top:472px;width:399px;height:397px;background:#f4f4f4"></div>
<div class="a" style="left:1092px;top:454px;width:15px;height:15px;border:1px solid #f4f4f4;background:#fff"></div>
<div class="a" style="left:1093px;top:455px;width:13px;height:13px;border:1px solid #7a7a7a;background:#fff"></div>
<div class="a" style="left:1095px;top:457px;width:9px;height:9px;background:linear-gradient(135deg,#c9ccd2,#f2f3f5)"></div>
<svg class="a" style="left:1111px;top:452px" width="12" height="18" viewBox="0 0 12 18"><path d="M7.5 0.8L10.5 0.8L12 3.5L9.8 7.5L10.2 8.6L5.2 15.5L1.3 17.3L2.8 12.5L4.2 9.8L3.6 8.2L5.8 4.8Z" fill="url(#bolt)" stroke="#fff" stroke-width=".6" stroke-linejoin="round"/></svg>
<div class="a" style="left:1091px;top:474px;width:380px;height:378px;border:1px solid #a9a9b0;background:#fff;"></div>
<div class="a" style="left:1471px;top:474px;width:15px;height:378px;background:#efefef"></div>
<div class="a" style="left:1091px;top:852px;width:395px;height:15px;background:#efefef"></div>
<svg class="a" style="left:1475px;top:478px" width="8" height="5"><path d="M0 4.5L4 0.5L8 4.5Z" fill="url(#ah)"/></svg>
<svg class="a" style="left:1475px;top:843px" width="8" height="5"><path d="M0 0.5L8 0.5L4 4.5Z" fill="url(#ah)"/></svg>
<svg class="a" style="left:1096px;top:856px" width="5" height="8"><path d="M4.5 0L0.5 4L4.5 8Z" fill="url(#av)"/></svg>
<svg class="a" style="left:1477px;top:856px" width="5" height="8"><path d="M0.5 0L4.5 4L0.5 8Z" fill="url(#av)"/></svg>
<div class="a" style="left:11px;top:879px;width:1484px;height:27px;border:1px solid #8a8a8a;"></div>
<div class="a" style="left:11px;top:912px;width:115px;height:21px;border:1px solid #8a8a8a;border-radius:3px;background:linear-gradient(#fbfbfb 0%,#f0f0f0 45%,#dedede 50%,#d8d8d8 100%);box-shadow:inset 0 0 0 1px rgba(255,255,255,.8)"></div>
<div class="a" style="left:129px;top:912px;width:115px;height:21px;border:1px solid #8a8a8a;border-radius:3px;background:linear-gradient(#fbfbfb 0%,#f0f0f0 45%,#dedede 50%,#d8d8d8 100%);box-shadow:inset 0 0 0 1px rgba(255,255,255,.8)"></div>
<div class="a" style="left:247px;top:912px;width:115px;height:21px;border:1px solid #8a8a8a;border-radius:3px;background:linear-gradient(#fbfbfb 0%,#f0f0f0 45%,#dedede 50%,#d8d8d8 100%);box-shadow:inset 0 0 0 1px rgba(255,255,255,.8)"></div>
<div class="a" style="left:365px;top:912px;width:115px;height:21px;border:1px solid #8a8a8a;border-radius:3px;background:linear-gradient(#fbfbfb 0%,#f0f0f0 45%,#dedede 50%,#d8d8d8 100%);box-shadow:inset 0 0 0 1px rgba(255,255,255,.8)"></div>
<div class="a" style="left:1399px;top:912px;width:30px;height:21px;border:1px solid #8a8a8a;border-radius:3px;background:linear-gradient(#fbfbfb 0%,#f0f0f0 45%,#dedede 50%,#d8d8d8 100%);box-shadow:inset 0 0 0 1px rgba(255,255,255,.8)"></div>
<div class="a" style="left:1432px;top:912px;width:30px;height:21px;border:1px solid #8a8a8a;border-radius:3px;background:linear-gradient(#fbfbfb 0%,#f0f0f0 45%,#dedede 50%,#d8d8d8 100%);box-shadow:inset 0 0 0 1px rgba(255,255,255,.8)"></div>
<div class="a" style="left:1465px;top:912px;width:30px;height:21px;border:1px solid #8a8a8a;border-radius:3px;background:linear-gradient(#fbfbfb 0%,#f0f0f0 45%,#dedede 50%,#d8d8d8 100%);box-shadow:inset 0 0 0 1px rgba(255,255,255,.8)"></div>
<div class="a" style="left:16px;top:914px;width:16px;height:16px;background:#fff;border-radius:2px;opacity:.8"></div>
<svg class="a" style="left:17px;top:915px" width="14" height="14" viewBox="0 0 14 14"><defs><linearGradient id="rd" x1="0" y1="0" x2="1" y2="1"><stop offset="0" stop-color="#ff7070"/><stop offset=".4" stop-color="#ec2424"/><stop offset="1" stop-color="#c81010"/></linearGradient></defs><rect x="0" y="0" width="14" height="14" rx="2" fill="url(#rd)"/><rect x="2.5" y="6" width="9" height="1.8" fill="#fff"/></svg>
<svg class="a" style="left:133px;top:913px" width="17" height="18" viewBox="0 0 17 18"><path d="M5.5 0.5H13L15.5 3V12H5.5Z" fill="#f6f9fd" stroke="#5a78b0"/><path d="M7.5 3.5H12.5V5.5H7.5Z M7.5 7H13.5" stroke="#5a78b0" stroke-width=".9" fill="none"/><path d="M0.5 7.5H5L6 9H15.5V17.5H0.5Z" fill="#e8b840" stroke="#b08018"/><path d="M1.2 11.5H16.3L15.2 17.3H0.7Z" fill="#f8d870" stroke="#b08018" stroke-width=".9"/></svg>
<svg class="a" style="left:254px;top:919px" width="11" height="7"><path d="M0.5 0.5H10.5L5.5 6Z" fill="#3e5ce0"/></svg>
<svg class="a" style="left:372px;top:919px" width="11" height="7"><path d="M0.5 0.5H10.5L5.5 6Z" fill="#3e5ce0"/></svg>
<svg class="a" style="left:1407px;top:914px" width="16" height="17" viewBox="0 0 16 17"><path d="M1 0.5H14L15.5 2V16.5H0.5V1Z" fill="#4b50c8" stroke="#3438a0"/><rect x="3.5" y="1" width="9" height="6" fill="#e2e2e8"/><rect x="3.5" y="2.5" width="9" height="3" fill="#c8c8d0"/><rect x="4" y="10.5" width="8" height="6" fill="#f8f8f8"/><rect x="5" y="11.5" width="2" height="4" fill="#3438a0"/></svg>
<svg class="a" style="left:1440px;top:915px" width="15" height="15" viewBox="0 0 15 15"><defs><linearGradient id="ok" x1="0" y1="0" x2="0" y2="1"><stop offset="0" stop-color="#52c85a"/><stop offset=".5" stop-color="#22a82c"/><stop offset="1" stop-color="#14901e"/></linearGradient></defs><rect x="0.5" y="0.5" width="14" height="14" rx="1.5" fill="url(#ok)" stroke="#128a1c"/><path d="M3 7.5L6 10.5L12 3.8" stroke="#fff" stroke-width="1.3" fill="none"/></svg>
<svg class="a" style="left:1471px;top:913px" width="18" height="18" viewBox="0 0 18 18"><path d="M3 3L15 15M15 3L3 15" stroke="#402030" stroke-width="4.6" stroke-linecap="square"/><path d="M3 3L15 15M15 3L3 15" stroke="#f0303a" stroke-width="3" stroke-linecap="square"/><path d="M4 3.6L14 13.6M14 3.6L4 13.6" stroke="#ff9aa0" stroke-width=".8"/></svg>
<div class="a" style="left:176px;top:156px;width:72px;height:19px;overflow:hidden"></div>
<div class="t" style="left:31.30px;top:6.0px;font-size:13px;font-weight:bold;color:#000;letter-spacing:0.185px;transform:scaleX(1.0528);transform-origin:0 0;">Event</div>
<div class="t" style="left:27.36px;top:56.0px;font-size:13px;font-weight:bold;color:#000;letter-spacing:0.242px;transform:scaleX(1.0974);transform-origin:0 0;">Event: 01551 / 0 Gemeindewerke Telfs,01556 / 0 Biochemiestr.58a,b,c,60a,b,c*Kundl,05094 / 0 Josef-Meng-Str.1,3,5*6330 Kufstein</div>
<div class="t" style="left:1175.94px;top:56.0px;font-size:13px;font-weight:normal;color:#000;letter-spacing:0.131px;transform:scaleX(1.0265);transform-origin:0 0;">Quick Checkin...</div>
<div class="t" style="left:1287.44px;top:54.0px;font-size:13px;font-weight:normal;color:#000;letter-spacing:0.197px;transform:scaleX(1.0690);transform-origin:0 0;">Neuer Container</div>
<div class="t" style="left:1450.10px;top:55.0px;font-size:14px;font-weight:normal;color:#fff;letter-spacing:-0.584px;transform:scaleX(0.9671);transform-origin:0 0;">TES</div>
<div class="t" style="left:18.10px;top:102.0px;font-size:13px;font-weight:bold;color:#000;letter-spacing:0.087px;transform:scaleX(1.0398);transform-origin:0 0;">Allgemein</div>
<div class="t" style="left:100.02px;top:102.0px;font-size:13px;font-weight:normal;color:#000;letter-spacing:0.150px;transform:scaleX(1.0867);transform-origin:0 0;">Veranstaltungsort</div>
<div class="t" style="left:232.10px;top:102.0px;font-size:13px;font-weight:normal;color:#000;letter-spacing:-0.167px;transform:scaleX(1.0571);transform-origin:0 0;">Ablauf</div>
<div class="t" style="left:288.36px;top:102.0px;font-size:13px;font-weight:normal;color:#000;letter-spacing:0.196px;transform:scaleX(1.0629);transform-origin:0 0;">Einladungen</div>
<div class="t" style="left:386.30px;top:102.0px;font-size:13px;font-weight:normal;color:#000;letter-spacing:0.163px;transform:scaleX(1.0702);transform-origin:0 0;">Individuelle Felder</div>
<div class="t" style="left:522.10px;top:102.0px;font-size:13px;font-weight:normal;color:#000;letter-spacing:0.078px;transform:scaleX(1.0520);transform-origin:0 0;">Vermerke</div>
<div class="t" style="left:532.80px;top:129.0px;font-size:13px;font-weight:normal;color:#fff;letter-spacing:0.347px;transform:scaleX(1.0640);transform-origin:0 0;">Detail</div>
<div class="t" style="left:1091.58px;top:129.0px;font-size:13px;font-weight:normal;color:#fff;letter-spacing:0.307px;transform:scaleX(1.0910);transform-origin:0 0;">Informationen</div>
<div class="t" style="left:27.10px;top:453.0px;font-size:13px;font-weight:normal;color:#fff;letter-spacing:0.144px;transform:scaleX(1.0547);transform-origin:0 0;">Anmerkung</div>
<div class="t" style="left:1127.96px;top:453.0px;font-size:13px;font-weight:normal;color:#fff;letter-spacing:0.067px;transform:scaleX(1.0631);transform-origin:0 0;">Abgesagt</div>
<div class="t" style="left:25.30px;top:158.0px;font-size:13px;font-weight:normal;color:#000;letter-spacing:0.135px;transform:scaleX(1.0581);transform-origin:0 0;">Nummer........................</div>
<div class="t" style="left:25.30px;top:181.0px;font-size:13px;font-weight:normal;color:#000;letter-spacing:0.148px;transform:scaleX(1.0590);transform-origin:0 0;">Bezeichnung.................</div>
<div class="t" style="left:25.30px;top:204.0px;font-size:13px;font-weight:normal;color:#000;letter-spacing:0.024px;transform:scaleX(1.0008);transform-origin:0 0;">Status...............................</div>
<div class="t" style="left:25.30px;top:227.0px;font-size:13px;font-weight:normal;color:#000;letter-spacing:0.206px;transform:scaleX(1.0963);transform-origin:0 0;">Eventleitung................</div>
<div class="t" style="left:492.02px;top:158.0px;font-size:13px;font-weight:normal;color:#000;letter-spacing:0.091px;transform:scaleX(1.0468);transform-origin:0 0;">Vorschlag................</div>
<div class="t" style="left:179.22px;top:158.0px;font-size:13px;font-weight:normal;color:#000;letter-spacing:0.210px;transform:scaleX(1.0470);transform-origin:0 0;">EV-103520</div>
<div class="t" style="left:618.22px;top:158.0px;font-size:13px;font-weight:normal;color:#000;letter-spacing:0.210px;transform:scaleX(1.0470);transform-origin:0 0;">EV-103820</div>
<div class="t" style="left:178.94px;top:181.0px;font-size:13px;font-weight:normal;color:#000;letter-spacing:0.229px;transform:scaleX(1.0562);transform-origin:0 0;">Hausversammlung</div>
<div class="t" style="left:179.44px;top:204.0px;font-size:13px;font-weight:normal;color:#000;letter-spacing:0.265px;transform:scaleX(1.0608);transform-origin:0 0;">in Planung</div>
<div class="t" style="left:179.74px;top:227.0px;font-size:13px;font-weight:normal;color:#000;letter-spacing:0.061px;transform:scaleX(1.0478);transform-origin:0 0;">Jovanovic, Danijela</div>
<div class="t" style="left:25.30px;top:262.0px;font-size:13px;font-weight:normal;color:#000;letter-spacing:0.196px;transform:scaleX(1.0885);transform-origin:0 0;">Datum von...................</div>
<div class="t" style="left:25.30px;top:286.0px;font-size:13px;font-weight:normal;color:#000;letter-spacing:0.186px;transform:scaleX(1.0876);transform-origin:0 0;">Datum bis....................</div>
<div class="t" style="left:179.22px;top:264.0px;font-size:13px;font-weight:normal;color:#000;letter-spacing:0.272px;transform:scaleX(1.0864);transform-origin:0 0;">20.11.2017</div>
<div class="t" style="left:283.30px;top:264.0px;font-size:13px;font-weight:normal;color:#000;letter-spacing:0.279px;transform:scaleX(1.0930);transform-origin:0 0;">18:00:00</div>
<div class="t" style="left:179.22px;top:288.0px;font-size:13px;font-weight:normal;color:#000;letter-spacing:0.245px;transform:scaleX(1.0745);transform-origin:0 0;">20.12.2017</div>
<div class="t" style="left:283.30px;top:288.0px;font-size:13px;font-weight:normal;color:#000;letter-spacing:0.279px;transform:scaleX(1.0930);transform-origin:0 0;">19:15:00</div>
<div class="t" style="left:25.30px;top:322.5px;font-size:13px;font-weight:normal;color:#000;letter-spacing:0.206px;transform:scaleX(1.0754);transform-origin:0 0;">Protokoll Ausfertigung..</div>
<div class="t" style="left:25.30px;top:345.5px;font-size:13px;font-weight:normal;color:#000;letter-spacing:0.173px;transform:scaleX(1.0652);transform-origin:0 0;">Protokoll Aushang.........</div>
<div class="t" style="left:340.46px;top:322.5px;font-size:13px;font-weight:normal;color:#000;letter-spacing:0.154px;transform:scaleX(1.0659);transform-origin:0 0;">Anfechtungsfrist Ende ordentliche Verwaltung...</div>
<div class="t" style="left:340.46px;top:345.5px;font-size:13px;font-weight:normal;color:#000;letter-spacing:0.151px;transform:scaleX(1.0647);transform-origin:0 0;">Anfechtungsfrist Ende au&szlig;erord. Verwaltung.....</div>
<div class="t" style="left:340.46px;top:368.5px;font-size:13px;font-weight:normal;color:#000;letter-spacing:0.131px;transform:scaleX(1.0649);transform-origin:0 0;">Anfechtungsfrist Ende 6 Monate........................</div>
<div class="t" style="left:39.22px;top:403.0px;font-size:13px;font-weight:normal;color:#000;letter-spacing:0.267px;transform:scaleX(1.0968);transform-origin:0 0;">erledigt</div>
<div class="t" style="left:39.22px;top:426.5px;font-size:13px;font-weight:normal;color:#000;letter-spacing:0.193px;transform:scaleX(1.0646);transform-origin:0 0;">Eventvorschl&auml;ge ignorieren</div>
<div class="t" style="left:266.86px;top:403.0px;font-size:13px;font-weight:normal;color:#000;letter-spacing:0.166px;transform:scaleX(1.0590);transform-origin:0 0;">&Uuml;bergabe-Ablauf</div>
<div class="t" style="left:1109.10px;top:156.0px;font-size:13px;font-weight:normal;color:#000;letter-spacing:0.087px;transform:scaleX(1.0445);transform-origin:0 0;">Anz...</div>
<div class="t" style="left:1148.86px;top:156.0px;font-size:13px;font-weight:normal;color:#000;letter-spacing:0.175px;transform:scaleX(1.0377);transform-origin:0 0;">Name</div>
<div class="t" style="left:1235.30px;top:156.0px;font-size:13px;font-weight:normal;color:#000;letter-spacing:0.654px;transform:scaleX(1.0411);transform-origin:0 0;">Neu</div>
<div class="t" style="left:1266.80px;top:156.0px;font-size:13px;font-weight:normal;color:#000;letter-spacing:0.319px;transform:scaleX(1.0432);transform-origin:0 0;">Li...</div>
<div class="t" style="left:1137.30px;top:176.0px;font-size:13px;font-weight:normal;color:#000;letter-spacing:-0.234px;">1</div>
<div class="t" style="left:1151.10px;top:176.0px;font-size:13px;font-weight:normal;color:#000;letter-spacing:0.143px;transform:scaleX(1.0496);transform-origin:0 0;">Abstimmung</div>
<div class="t" style="left:1137.30px;top:192.5px;font-size:13px;font-weight:normal;color:#000;letter-spacing:-0.234px;">0</div>
<div class="t" style="left:1151.10px;top:192.5px;font-size:13px;font-weight:normal;color:#000;letter-spacing:-0.119px;transform:scaleX(1.0463);transform-origin:0 0;">Ticket</div>
<div class="t" style="left:1137.30px;top:209.5px;font-size:13px;font-weight:normal;color:#000;letter-spacing:-0.234px;">0</div>
<div class="t" style="left:1151.10px;top:209.5px;font-size:13px;font-weight:normal;color:#000;letter-spacing:0.115px;transform:scaleX(1.0365);transform-origin:0 0;">Termin</div>
<div class="t" style="left:14.58px;top:885.0px;font-size:13px;font-weight:normal;color:#000;letter-spacing:0.122px;transform:scaleX(1.0417);transform-origin:0 0;">Erstellt am...............</div>
<div class="t" style="left:139.86px;top:885.0px;font-size:13px;font-weight:bold;color:#000;letter-spacing:-0.110px;transform:scaleX(0.9508);transform-origin:0 0;">19.10.2015 14:34:26</div>
<div class="t" style="left:262.30px;top:885.0px;font-size:13px;font-weight:normal;color:#000;letter-spacing:0.143px;transform:scaleX(1.0663);transform-origin:0 0;">Ersteller..................</div>
<div class="t" style="left:472.08px;top:885.0px;font-size:13px;font-weight:normal;color:#000;letter-spacing:0.234px;transform:scaleX(1.0724);transform-origin:0 0;">Letzte &Auml;nderung.....</div>
<div class="t" style="left:598.74px;top:885.0px;font-size:13px;font-weight:bold;color:#000;letter-spacing:-0.164px;transform:scaleX(0.9543);transform-origin:0 0;">29.08.2025 08:46:27</div>
<div class="t" style="left:720.30px;top:885.0px;font-size:13px;font-weight:normal;color:#000;letter-spacing:0.200px;transform:scaleX(1.0704);transform-origin:0 0;">Letzter Benutzer....</div>
<div class="t" style="left:846.24px;top:885.0px;font-size:13px;font-weight:bold;color:#000;letter-spacing:-0.761px;transform:scaleX(0.8791);transform-origin:0 0;">CPAJOD</div>
<div class="t" style="left:35.74px;top:914.0px;font-size:13px;font-weight:normal;color:#000;letter-spacing:0.182px;transform:scaleX(1.0559);transform-origin:0 0;"><u>L</u>&ouml;schen</div>
<div class="t" style="left:155.10px;top:914.0px;font-size:13px;font-weight:normal;color:#000;letter-spacing:0.144px;transform:scaleX(1.0664);transform-origin:0 0;"><u>D</u>okumente</div>
<div class="t" style="left:268.86px;top:914.0px;font-size:13px;font-weight:normal;color:#000;letter-spacing:0.222px;transform:scaleX(1.0582);transform-origin:0 0;">Be<u>r</u>ichte</div>
<div class="t" style="left:388.10px;top:914.0px;font-size:13px;font-weight:normal;color:#000;letter-spacing:0.148px;transform:scaleX(1.0749);transform-origin:0 0;"><u>A</u>ktionen</div>
<div class="a" style="left:247px;top:156px;width:2px;height:19px;background:#f3f3f3"></div>
</body></html>
